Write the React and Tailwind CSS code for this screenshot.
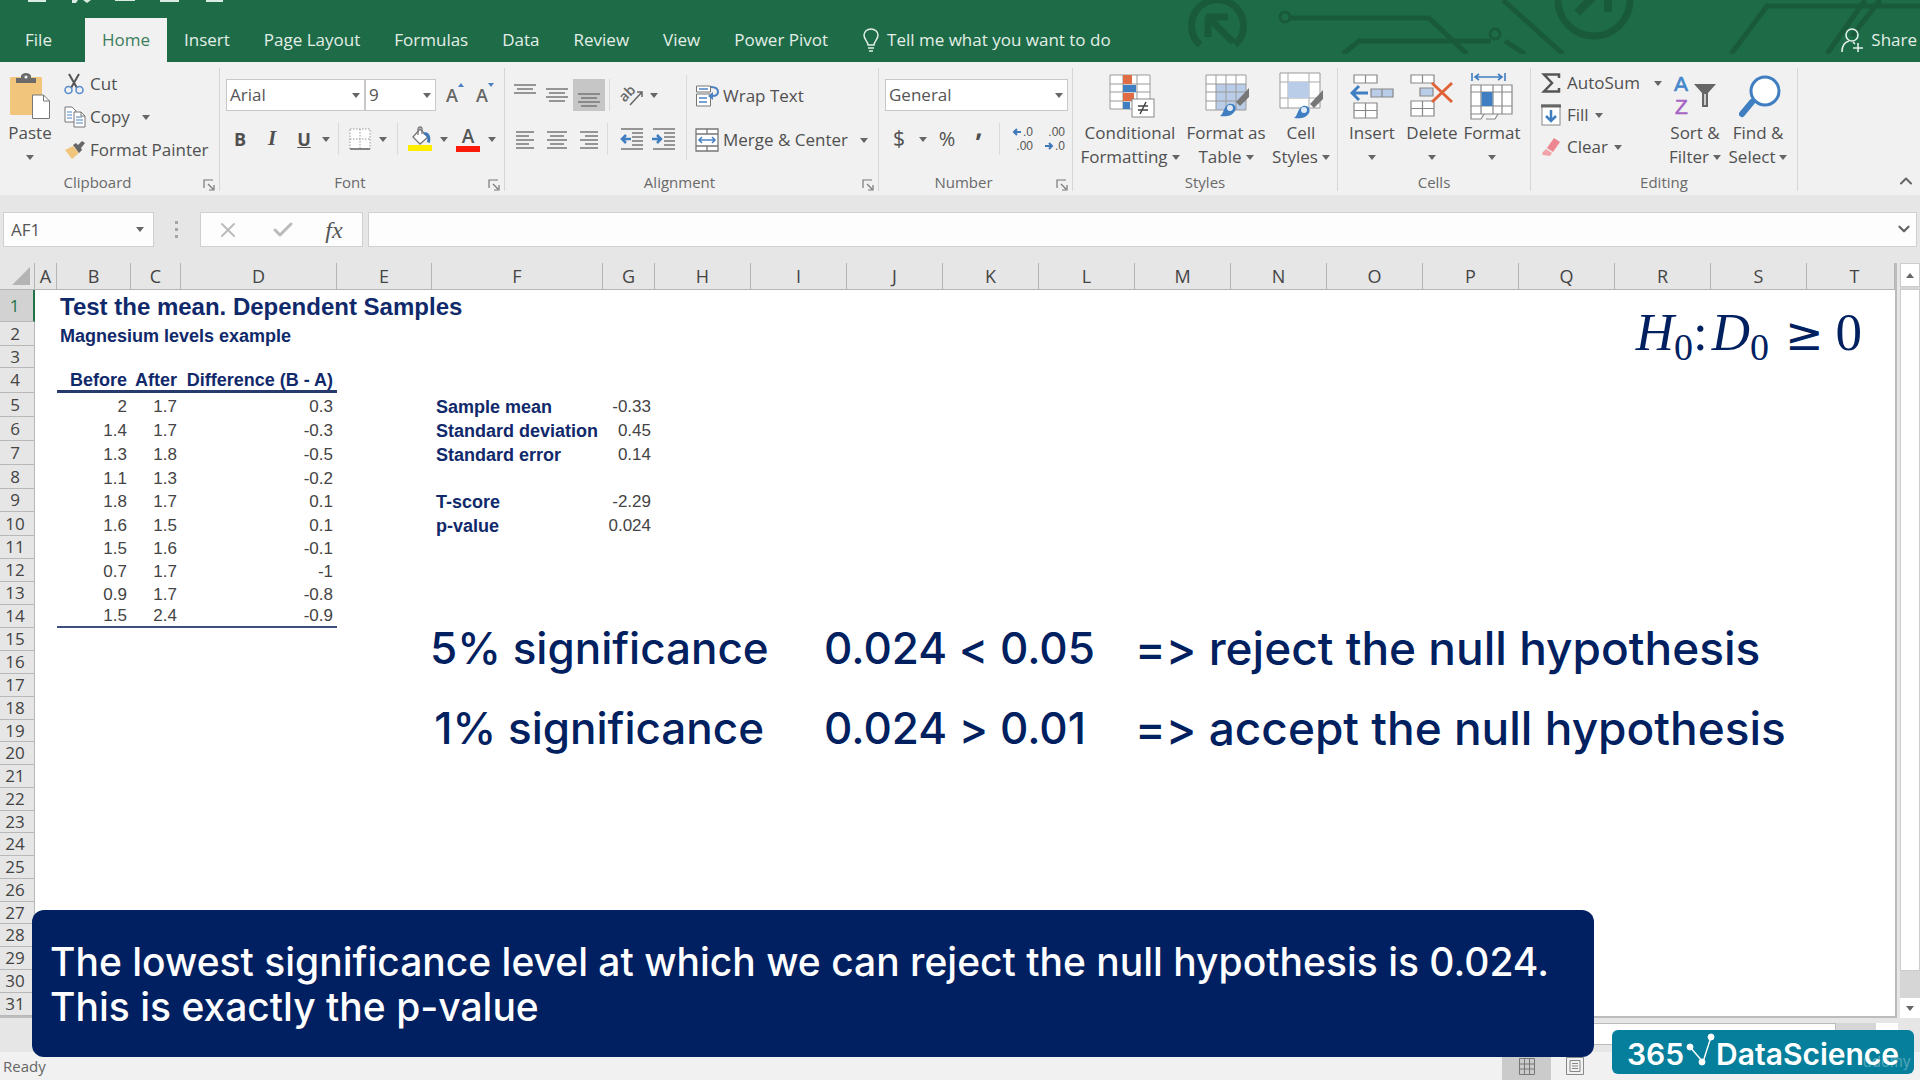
import clsx from 'clsx'
import { Check, ChevronDown, ChevronUp, X } from 'lucide-react'

const TABS = ['File', 'Home', 'Insert', 'Page Layout', 'Formulas', 'Data', 'Review', 'View', 'Power Pivot']

const COLUMNS = [
  { id: 'A', w: 'w-[22px]' },
  { id: 'B', w: 'w-[74px]' },
  { id: 'C', w: 'w-[50px]' },
  { id: 'D', w: 'w-[156px]' },
  { id: 'E', w: 'w-[95px]' },
  { id: 'F', w: 'w-[171px]' },
  { id: 'G', w: 'w-[52px]' },
  ...'HIJKLMNOPQRS'.split('').map(id => ({ id, w: 'w-[96px]' })),
  { id: 'T', w: '' },
]

const HEIGHTS = {
  1: 'h-[32px]', 2: 'h-[24px]', 3: 'h-[22px]', 4: 'h-[25px]', 5: 'h-[24px]', 6: 'h-[24px]',
  7: 'h-[24px]', 8: 'h-[24px]', 9: 'h-[23px]', 10: 'h-[24px]', 19: 'h-[22px]', 23: 'h-[22px]', 27: 'h-[22px]',
}

const SAMPLES = [
  ['2', '1.7', '0.3'],
  ['1.4', '1.7', '-0.3'],
  ['1.3', '1.8', '-0.5'],
  ['1.1', '1.3', '-0.2'],
  ['1.8', '1.7', '0.1'],
  ['1.6', '1.5', '0.1'],
  ['1.5', '1.6', '-0.1'],
  ['0.7', '1.7', '-1'],
  ['0.9', '1.7', '-0.8'],
  ['1.5', '2.4', '-0.9'],
]

const STATS = {
  5: ['Sample mean', '-0.33'],
  6: ['Standard deviation', '0.45'],
  7: ['Standard error', '0.14'],
  9: ['T-score', '-2.29'],
  10: ['p-value', '0.024'],
}

const ROWS = Array.from({ length: 31 }, (_, i) => i + 1)

function cellValue(row, col) {
  if (row === 1 && col === 'B') return 'Test the mean. Dependent Samples'
  if (row === 2 && col === 'B') return 'Magnesium levels example'
  if (row === 4) return { B: 'Before', C: 'After', D: 'Difference (B - A)' }[col]
  if (row >= 5 && row <= 14 && 'BCD'.includes(col)) return SAMPLES[row - 5]['BCD'.indexOf(col)]
  if (STATS[row] && col === 'F') return STATS[row][0]
  if (STATS[row] && col === 'G') return STATS[row][1]
  return null
}

/* ---------- small pieces ---------- */

const Caret = ({ className }) => (
  <svg viewBox="0 0 8 5" className={clsx('h-[5px] w-2 shrink-0', className)} fill="#666"><path d="M0 0h8L4 5z" /></svg>
)

const Divider = ({ className }) => <span className={clsx('w-px shrink-0 bg-[#dadada]', className)} />

function IconButton({ label, className, children }) {
  return (
    <button aria-label={label} className={clsx('flex shrink-0 items-center justify-center', className)}>{children}</button>
  )
}

function Group({ name, launcher, className, children }) {
  return (
    <section aria-label={name} className={clsx('relative flex shrink-0 flex-col border-r border-[#d6d6d6]', className)}>
      <div className="flex h-[106px]">{children}</div>
      <div className={clsx('flex h-[20px] items-end justify-center text-[15px] leading-[18px] text-[#6a6a6a]', launcher && 'pr-6')}>{name}</div>
      {launcher && (
        <button aria-label={`${name} settings`} className="absolute right-1 bottom-0">
          <svg viewBox="0 0 12 12" className="size-3" fill="none" stroke="#777" strokeWidth="1.2">
            <path d="M1 9V1h9M5 5l5 5M11 6v5H6" />
          </svg>
        </button>
      )}
    </section>
  )
}

function BigButton({ icon, lines, className }) {
  const [first, second] = lines
  return (
    <button className={clsx('flex shrink-0 flex-col items-center pt-[3px] whitespace-nowrap', className)}>
      <span className="flex h-[50px] items-center">{icon}</span>
      <span className="h-6 leading-6">{first}</span>
      <span className="flex h-6 items-center gap-1 leading-6">{second}<Caret /></span>
    </button>
  )
}

function Combo({ label, value, className }) {
  return (
    <span className={clsx('relative h-8 shrink-0', className)}>
      <select aria-label={label} defaultValue={value}
              className="h-full w-full appearance-none border border-[#c8c8c8] bg-white px-[3px] text-[17px] text-[#555] outline-none">
        <option>{value}</option>
      </select>
      <Caret className="pointer-events-none absolute top-[14px] right-[5px]" />
    </span>
  )
}

/* ---------- icons ---------- */

const PasteIcon = () => (
  <svg viewBox="0 0 42 46" className="h-[46px] w-[42px]">
    <rect x="1" y="4" width="32" height="38" rx="1" fill="#f2c57c" />
    <path d="M7 10V5h5V3a5 3 0 0 1 10 0v2h5v5z" fill="#6b6b6b" />
    <circle cx="17" cy="4" r="1.6" fill="#f1f1f1" />
    <path d="M23.500 22h11l6 6v17.500h-17z" fill="#fff" stroke="#777" />
    <path d="M34.500 22v6h6" fill="none" stroke="#777" />
  </svg>
)

const CutIcon = () => (
  <svg viewBox="0 0 20 22" className="h-[22px] w-5" fill="none">
    <path d="M5 1l8 14M15 1L7 15" stroke="#555" strokeWidth="2" />
    <circle cx="4.500" cy="17" r="3.500" stroke="#5b8fd0" strokeWidth="1.600" />
    <circle cx="15.500" cy="17" r="3.500" stroke="#5b8fd0" strokeWidth="1.600" />
  </svg>
)

const CopyIcon = () => (
  <svg viewBox="0 0 22 22" className="size-[22px]" fill="#fff" stroke="#777">
    <path d="M1 1h7l4 4v11H1z" />
    <path d="M3 6h5M3 9h5M3 12h5" stroke="#4a82c4" />
    <path d="M10 6h7l4 4v11H10z" />
    <path d="M12 11h6M12 14h7M12 17h7" stroke="#4a82c4" />
    <path d="M17 6v4h4" fill="none" />
  </svg>
)

const BrushIcon = () => (
  <svg viewBox="0 0 22 20" className="h-5 w-[22px]">
    <path d="M1 10l8-4 6 7-7 6z" fill="#f2c57c" />
    <path d="M9 5l3-2 2 2 4-4 3 2-4 5 1 2-3 3z" fill="#666" />
  </svg>
)

// Horizontal text lines, each given as [x1, x2, y]
const Lines = ({ rows, children }) => (
  <svg viewBox="0 0 24 24" className="size-6" fill="none" stroke="#767676" strokeWidth="1.500">
    {rows.map(([a, b, y]) => <path key={y} d={`M${a} ${y}H${b}`} />)}
    {children}
  </svg>
)

const OUTDENT = [[1, 23, 2], [12, 23, 6], [12, 23, 10], [12, 23, 14], [12, 23, 18], [1, 23, 22]]

const FontSizeIcon = ({ up }) => (
  <span className="relative w-full pr-1 text-center text-[18px] leading-6 font-semibold text-[#666]">
    A
    <svg viewBox="0 0 6 4" className="absolute top-0 right-0 h-1 w-1.5" fill="#4a82c4">
      <path d={up ? 'M0 4h6L3 0z' : 'M0 0h6L3 4z'} />
    </svg>
  </span>
)

const BorderIcon = () => (
  <svg viewBox="0 0 22 22" className="size-[22px]" fill="#fff" stroke="#999">
    <path d="M1 1h20v20H1zM11 1v20M1 11h20" strokeDasharray="1.500 1.500" />
    <path d="M1 21h20" stroke="#666" strokeWidth="1.500" />
  </svg>
)

const FillColorIcon = () => (
  <svg viewBox="0 0 24 26" className="h-[26px] w-6">
    <path d="M12 3l8 8-8 7-7-7z" fill="#fff" stroke="#777" strokeWidth="1.300" />
    <path d="M10 9V3a2 2 0 0 1 4 0v5" fill="none" stroke="#777" strokeWidth="1.300" />
    <path d="M17 6c5 1 6 5 5 11l-3-1c1-4 0-6-4-8z" fill="#4078b8" />
    <rect y="19" width="24" height="6" fill="#ffed00" />
  </svg>
)

const FontColorIcon = () => (
  <span className="flex w-6 flex-col items-center text-[19px] leading-5 font-semibold text-[#555]">
    A<span className="h-1.5 w-6 bg-[#fb1a09]" />
  </span>
)

const OrientIcon = () => (
  <svg viewBox="0 0 26 24" className="h-6 w-[26px] overflow-visible" fill="none" stroke="#666" strokeWidth="1.500">
    <text x="0" y="15" transform="rotate(-45 8 12)" fontSize="14" fontWeight="600" fill="#666" stroke="none">ab</text>
    <path d="M10 22L22 9M17 9h5v5" />
  </svg>
)

const WrapIcon = () => (
  <svg viewBox="0 0 24 24" className="size-6" fill="#fff" stroke="#777">
    <path d="M1.500 2h14v6h-14zM1.500 10h14v12h-14z" />
    <path d="M4 5h9M4 14h8M4 18h8" stroke="#4a82c4" strokeWidth="1.400" />
    <path d="M16 3c5 0 7 2 7 5s-2 4-6 4" fill="none" stroke="#4a82c4" strokeWidth="2" />
    <path d="M18 8l-5 4 5 4z" fill="#4a82c4" stroke="none" />
  </svg>
)

const MergeIcon = () => (
  <svg viewBox="0 0 24 24" className="size-6" fill="#fff" stroke="#777" strokeWidth="1.300">
    <path d="M1 1h22v22H1zM1 6h22M1 18h22M12 1v5M12 18v5" />
    <path d="M4 12h16M7 9l-3 3 3 3M17 9l3 3-3 3" fill="none" stroke="#4a82c4" strokeWidth="1.600" />
  </svg>
)

const DecimalIcon = ({ top, bottom, left }) => (
  <svg viewBox="0 0 22 26" className="h-[26px] w-[22px] overflow-visible font-['Liberation_Sans',sans-serif]" fill="#555" fontSize="12">
    <text x="21" y="10" textAnchor="end">{top}</text>
    <text x="21" y="24" textAnchor="end">{bottom}</text>
    <path d={left ? 'M9 6H2M5 3L2 6l3 3' : 'M1 20h7M5 17l3 3-3 3'} fill="none" stroke="#3f77b8" strokeWidth="2" />
  </svg>
)

const Brush = ({ x, y }) => (
  <g transform={`translate(${x} ${y})`}>
    <path d="M29 0v9l-9 9-4-4z" fill="#777" />
    <path d="M0 28c4-2 3-9 9-12 5-1 8 3 6 7-3 5-9 6-15 5z" fill="#3f7ec0" />
    <circle cx="10" cy="20" r="3" fill="#dfeaf6" />
  </g>
)

const ConditionalIcon = () => (
  <svg viewBox="0 0 46 44" className="ml-1 h-11 w-[46px]">
    <path d="M1 1h40v34H1zM1 10h40M1 18h40M1 27h40M14 1v34M28 1v34" fill="#fff" stroke="#999" />
    <path d="M14 1h9v9h-9zM14 19h11v8H14z" fill="#e06c43" />
    <path d="M14 11h13v7H14zM14 28h7v7h-7z" fill="#3f7ec0" />
    <rect x="23" y="25" width="22" height="18" fill="#fff" stroke="#888" />
    <path d="M29 32h10M29 36h10M37 28l-6 12" stroke="#444" strokeWidth="1.500" />
  </svg>
)

const FormatTableIcon = () => (
  <svg viewBox="0 0 46 44" className="ml-1 h-11 w-[46px]">
    <path d="M1 1h40v35H1z" fill="#fff" />
    <path d="M11 10h30v26H11z" fill="#b9cde8" />
    <path d="M1 1h40v35H1zM1 10h40M1 18h40M1 27h40M11 1v35M21 1v35M31 1v35" fill="none" stroke="#999" />
    <Brush x="15" y="14" />
  </svg>
)

const CellStylesIcon = () => (
  <svg viewBox="0 0 48 48" className="ml-1 size-12">
    <path d="M1 1h40v35H1z" fill="#fff" stroke="#999" />
    <path d="M1 10h40M1 26h40M9 1v35M30 1v35" stroke="#aaa" />
    <path d="M9 10h21v16H9z" fill="#b9cde8" />
    <Brush x="15" y="18" />
  </svg>
)

const InsertIcon = () => (
  <svg viewBox="0 0 44 46" className="h-[46px] w-11" fill="#fff" stroke="#888" strokeWidth="1.200">
    <path d="M4 2h23v8H4zM15.500 2v8M4 30h23v15H4zM4 37.500h23M15.500 30v15" />
    <path d="M21 16h22v8H21zM32 16v8" fill="#b9cde8" />
    <path d="M18 20H2M9 13l-7 7 7 7" fill="none" stroke="#3f7ec0" strokeWidth="3" />
  </svg>
)

const DeleteIcon = () => (
  <svg viewBox="0 0 44 46" className="h-[46px] w-11" fill="#fff" stroke="#888" strokeWidth="1.200">
    <path d="M1 2h23v8H1zM12.500 2v8M1 28h23v15H1zM1 35.500h23M12.500 28v15" />
    <path d="M10 15h13v8H10z" fill="#b9cde8" />
    <path d="M22 10l20 19M42 10L22 29" fill="none" stroke="#e06338" strokeWidth="3" />
  </svg>
)

const FormatIcon = () => (
  <svg viewBox="0 0 44 48" className="h-12 w-11" fill="#fff" stroke="#888" strokeWidth="1.200">
    <path d="M1 13h41v29H1zM1 20h41M1 34h41M11 13v29M23 13v29M32 13v29M1 42v5h10l3-5M16 47h9l3-5" />
    <path d="M11.500 20h11v14h-11z" fill="#3f7ec0" stroke="none" />
    <path d="M2 1v8M35 1v8M5 5h27M9 2L5 5l4 3M28 2l4 3-4 3" fill="none" stroke="#3f7ec0" strokeWidth="1.600" />
  </svg>
)

const SumIcon = () => (
  <svg viewBox="0 0 20 22" className="h-[22px] w-5" fill="none" stroke="#555" strokeWidth="2.500">
    <path d="M18 6V2.500H3l8 8.500-8 8.500h15V16" />
  </svg>
)

const FillIcon = () => (
  <svg viewBox="0 0 20 22" className="h-[22px] w-5" fill="none">
    <rect x="1" y="1" width="18" height="20" fill="#fff" stroke="#888" />
    <path d="M0 2h20" stroke="#666" strokeWidth="3" />
    <path d="M10 6v11M5 12l5 5 5-5" stroke="#3f7ec0" strokeWidth="2.500" />
  </svg>
)

const ClearIcon = () => (
  <svg viewBox="0 0 20 20" className="size-5">
    <path d="M13 1l6 4-7 10-6-4z" fill="#ec8790" />
    <path d="M5 12l6 4-2 3-7-1-1-2z" fill="#f2a3a9" />
  </svg>
)

const SortIcon = () => (
  <svg viewBox="0 0 42 48" className="h-12 w-[42px] overflow-visible font-['Liberation_Sans',sans-serif]" fontSize="21">
    <text x="0" y="19" fill="#4386cb" stroke="#4386cb" strokeWidth="0.600">A</text>
    <text x="1" y="42" fill="#a664c4" stroke="#a664c4" strokeWidth="0.600">Z</text>
    <path d="M20 12h22l-8 9v14h-6V21z" fill="#666" />
    <path d="M31 22v11" stroke="#f1f1f1" strokeWidth="1.500" />
  </svg>
)

const FindIcon = () => (
  <svg viewBox="0 0 42 44" className="ml-1 h-11 w-[42px]">
    <path d="M13 28L3 40" stroke="#3f7ec0" strokeWidth="6" strokeLinecap="round" />
    <circle cx="26" cy="17" r="14" fill="#fff" stroke="#3f7ec0" strokeWidth="3" />
  </svg>
)

/* ---------- page parts ---------- */

function TitleBar() {
  return (
    <header className="relative flex h-[62px] items-end overflow-hidden bg-[#1e6b47] text-[17px] text-[#e3efe8]">
      <svg viewBox="0 0 740 54" className="absolute top-0 right-0 h-[54px] w-[740px]" fill="none" stroke="#195a3b" strokeWidth="5">
        <path d="M20 45a26 26 0 1 1 35 0M28 17v20M26 17h22M29 18l24 24" strokeWidth="7" />
        <circle cx="105" cy="17" r="5" strokeWidth="3" />
        <path d="M111 18h138l38 36M163 54l16-13h132M325 41l20 13" />
        <circle cx="315" cy="34" r="5" strokeWidth="3" />
        <path d="M323 0l60 54" />
        <circle cx="414" cy="0" r="36" strokeWidth="7" />
        <path d="M397 13l18-18M428 12V-4" strokeWidth="8" />
        <path d="M551 54l36-48h153M647 54l38-54M672 36l28-36" />
      </svg>
      <svg viewBox="0 0 230 4" className="absolute top-0 left-0 h-1 w-[230px]" fill="#dbeae2">
        <path d="M28 0h18v2H28zM72 0h6l-2 3h-4zM83 0h8l-4 3zM115 0h20v1h-20zM160 0h19v2h-19zM206 0h17v2h-17z" />
      </svg>
      <nav className="relative flex h-[44px]">
        {TABS.map(tab => (
          <button key={tab}
                  className={clsx('h-full whitespace-nowrap',
                    tab === 'Home' ? 'w-[82px] bg-[#f1f1f1] text-[#3c7d5c]' : tab === 'File' ? 'w-[85px] pr-2' : 'px-[17px]')}>
            {tab}
          </button>
        ))}
      </nav>
      <button className="relative flex h-[44px] items-center gap-2 pl-[18px]">
        <svg viewBox="0 0 16 24" className="h-6 w-4" fill="none" stroke="#e3efe8" strokeWidth="1.500">
          <path d="M5 17c0-4-4-5-4-10a7 6 0 0 1 14 0c0 5-4 6-4 10zM5 20h6M6 23h4" />
        </svg>
        Tell me what you want to do
      </button>
      <button className="relative ml-auto flex h-[44px] items-center gap-2 pr-[3px]">
        <svg viewBox="0 0 22 26" className="h-[26px] w-[22px]" fill="none" stroke="#e3efe8" strokeWidth="1.600">
          <circle cx="11" cy="8" r="6" />
          <path d="M1 25c0-7 3-10 7-11M12 15l2 2M17 16v9M12 21h10" />
        </svg>
        Share
      </button>
    </header>
  )
}

function Ribbon() {
  return (
    <div className="relative flex h-[133px] bg-[#f1f1f1] pt-[6px] pb-1 text-[17px] text-[#505050]">
      <Group name="Clipboard" launcher className="w-[220px]">
        <BigButton icon={<PasteIcon />} lines={['Paste']} className="w-[60px]" />
        <div className="flex flex-col gap-[9px] pt-1 pl-1">
          <button className="flex h-6 items-center gap-[6px]"><CutIcon />Cut</button>
          <button className="flex h-6 items-center gap-1"><CopyIcon />Copy<Caret className="ml-2" /></button>
          <button className="flex h-6 items-center gap-1 whitespace-nowrap"><BrushIcon />Format Painter</button>
        </div>
      </Group>

      <Group name="Font" launcher className="w-[285px]">
        <div className="flex flex-col gap-[14px] pt-[11px] pl-[6px]">
          <div className="flex items-center">
            <Combo label="Font family" value="Arial" className="w-[139px]" />
            <Combo label="Font size" value="9" className="w-[71px]" />
            <IconButton label="Increase font size" className="ml-2 w-5"><FontSizeIcon up /></IconButton>
            <IconButton label="Decrease font size" className="ml-[10px] w-5"><FontSizeIcon /></IconButton>
          </div>
          <div className="flex h-7 items-center">
            <IconButton label="Bold" className="w-7 text-[18px] font-bold">B</IconButton>
            <IconButton label="Italic" className="ml-1 w-7 font-['Liberation_Serif',serif] text-[21px] font-bold italic">I</IconButton>
            <IconButton label="Underline" className="ml-1 w-7 text-[18px] font-bold underline">U</IconButton>
            <Caret className="ml-1" />
            <Divider className="ml-2 h-8" />
            <IconButton label="Borders" className="ml-[10px] w-[22px]"><BorderIcon /></IconButton>
            <Caret className="ml-2" />
            <Divider className="ml-[10px] h-8" />
            <IconButton label="Fill colour" className="ml-[10px] w-6"><FillColorIcon /></IconButton>
            <Caret className="ml-2" />
            <IconButton label="Font colour" className="ml-2 w-6"><FontColorIcon /></IconButton>
            <Caret className="ml-2" />
          </div>
        </div>
      </Group>

      <Group name="Alignment" launcher className="w-[374px]">
        <div className="flex flex-col gap-[14px] pt-[11px] pl-[6px]">
          <div className="flex h-8 items-center">
            <IconButton label="Top align" className="w-7"><Lines rows={[[1, 23, 2], [4, 20, 6], [1, 23, 10]]} /></IconButton>
            <IconButton label="Middle align" className="ml-1 w-7"><Lines rows={[[1, 23, 6], [4, 20, 10], [1, 23, 14], [4, 20, 18]]} /></IconButton>
            <IconButton label="Bottom align" className="ml-[2px] h-8 w-8 bg-[#c6c6c6]"><Lines rows={[[1, 23, 11], [4, 20, 15], [1, 23, 19], [4, 20, 23]]} /></IconButton>
            <Divider className="ml-1 h-8" />
            <IconButton label="Orientation" className="ml-[10px] w-[26px]"><OrientIcon /></IconButton>
            <Caret className="ml-1" />
          </div>
          <div className="flex h-7 items-center">
            <IconButton label="Align left" className="w-7"><Lines rows={[[3, 21, 5], [3, 16, 9], [3, 21, 13], [3, 16, 17], [3, 21, 21]]} /></IconButton>
            <IconButton label="Center" className="ml-1 w-7"><Lines rows={[[2, 22, 5], [5, 19, 9], [2, 22, 13], [5, 19, 17], [2, 22, 21]]} /></IconButton>
            <IconButton label="Align right" className="ml-1 w-7"><Lines rows={[[3, 21, 5], [8, 21, 9], [3, 21, 13], [8, 21, 17], [3, 21, 21]]} /></IconButton>
            <Divider className="ml-1 h-8" />
            <IconButton label="Decrease indent" className="ml-[10px] w-7">
              <Lines rows={OUTDENT}><path d="M11 12H2M6 8l-4 4 4 4" stroke="#3f7ec0" strokeWidth="2.500" /></Lines>
            </IconButton>
            <IconButton label="Increase indent" className="ml-1 w-7">
              <Lines rows={OUTDENT}><path d="M0 12h9M5 8l4 4-4 4" stroke="#3f7ec0" strokeWidth="2.500" /></Lines>
            </IconButton>
          </div>
        </div>
        <Divider className="mt-[7px] ml-2 h-[85px]" />
        <div className="flex flex-col gap-[18px] pt-4 pl-2">
          <button className="flex h-6 items-center gap-1 whitespace-nowrap"><WrapIcon />Wrap Text</button>
          <button className="flex h-7 items-center gap-1 whitespace-nowrap"><MergeIcon />Merge &amp; Center<Caret className="ml-2" /></button>
        </div>
      </Group>

      <Group name="Number" launcher className="w-[194px]">
        <div className="flex flex-col gap-[14px] pt-[11px] pl-[6px]">
          <Combo label="Number format" value="General" className="w-[183px]" />
          <div className="flex h-7 items-center">
            <IconButton label="Currency" className="w-7 text-[21px]">$</IconButton>
            <Caret className="ml-[6px]" />
            <IconButton label="Percent" className="ml-2 w-6 text-[20px]">%</IconButton>
            <IconButton label="Comma" className="ml-2 h-9 w-6 items-start text-[26px] leading-3 font-bold">,</IconButton>
            <Divider className="ml-2 h-8" />
            <IconButton label="Increase decimal" className="ml-3 w-[22px]"><DecimalIcon left top=".0" bottom=".00" /></IconButton>
            <IconButton label="Decrease decimal" className="ml-[10px] w-[22px]"><DecimalIcon top=".00" bottom=".0" /></IconButton>
          </div>
        </div>
      </Group>

      <Group name="Styles" className="w-[265px]">
        <BigButton icon={<ConditionalIcon />} lines={['Conditional', 'Formatting']} className="w-[114px]" />
        <BigButton icon={<FormatTableIcon />} lines={['Format as', 'Table']} className="w-[78px]" />
        <BigButton icon={<CellStylesIcon />} lines={['Cell', 'Styles']} className="w-[72px]" />
      </Group>

      <Group name="Cells" className="w-[193px]">
        <BigButton icon={<InsertIcon />} lines={['Insert']} className="ml-1 w-[60px]" />
        <BigButton icon={<DeleteIcon />} lines={['Delete']} className="w-[60px]" />
        <BigButton icon={<FormatIcon />} lines={['Format']} className="w-[60px]" />
      </Group>

      <Group name="Editing" className="w-[267px]">
        <div className="flex w-[132px] flex-col gap-2 pt-[3px] pl-[10px]">
          <button className="flex h-6 items-center gap-[6px]"><SumIcon />AutoSum<Caret className="ml-2" /></button>
          <button className="flex h-6 items-center gap-[6px]"><FillIcon />Fill<Caret /></button>
          <button className="flex h-6 items-center gap-[6px]"><ClearIcon />Clear<Caret /></button>
        </div>
        <BigButton icon={<SortIcon />} lines={['Sort &', 'Filter']} className="w-[64px]" />
        <BigButton icon={<FindIcon />} lines={['Find &', 'Select']} className="w-[62px]" />
      </Group>

      <button aria-label="Collapse ribbon" className="mt-auto mr-1 ml-auto"><ChevronUp size={20} color="#666" strokeWidth={2.500} /></button>
    </div>
  )
}

function FormulaBar() {
  return (
    <div className="flex h-[68px] items-start bg-[#e6e6e6] px-[3px] pt-[17px]">
      <span className="relative h-[35px] w-[151px] shrink-0">
        <input aria-label="Name box" defaultValue="AF1"
               className="h-full w-full border border-[#d0d0d0] bg-[#fdfdfd] px-[7px] text-[17px] text-[#555] outline-none" />
        <Caret className="pointer-events-none absolute top-[15px] right-[10px]" />
      </span>
      <svg viewBox="0 0 4 18" className="mx-[21px] mt-[9px] h-[18px] w-1 shrink-0" fill="#a5a5a5">
        <path d="M0 0h3v3H0zM0 7h3v3H0zM0 14h3v3H0z" />
      </svg>
      <div className="flex h-[35px] w-[163px] shrink-0 items-center justify-around border border-[#d0d0d0] bg-[#fdfdfd] pr-1">
        <button aria-label="Cancel"><X size={24} color="#bbb" /></button>
        <button aria-label="Enter"><Check size={24} color="#bbb" strokeWidth={3} /></button>
        <button aria-label="Insert function" className="font-['Liberation_Serif',serif] text-[24px] leading-6 text-[#555] italic">fx</button>
      </div>
      <span className="relative ml-[5px] h-[35px] grow">
        <input aria-label="Formula" className="h-full w-full border border-[#d0d0d0] bg-[#fdfdfd] px-2 outline-none" />
        <ChevronDown size={18} color="#666" strokeWidth={3} className="pointer-events-none absolute top-2 right-1" />
      </span>
    </div>
  )
}

function Cell({ row, col }) {
  const inTable = 'BCD'.includes(col)
  const value = cellValue(row, col)
  const bold = row <= 4 || col === 'F'
  return (
    <td className={clsx('p-0 align-bottom whitespace-nowrap',
      row === 1 ? 'text-[24px] leading-[30px]' : bold ? 'text-[18px] leading-5' : 'text-[17px] leading-5',
      bold ? 'font-bold text-[#10296b]' : 'text-[#444]',
      row <= 2 ? 'pl-[3px] text-left' : col === 'F' ? 'pl-1 text-left' : 'pr-[4px] text-right',
      row === 4 && inTable && 'border-b-[3px] border-[#263a6e]',
      row === 14 && inTable && 'border-b-2 border-[#3c4f7d]')}>
      {value}
    </td>
  )
}

function Sheet() {
  return (
    <table className="w-full table-fixed border-separate border-spacing-0 bg-white font-['Liberation_Sans',Arial,sans-serif]">
      <colgroup>
        <col className="w-[35px]" />
        {COLUMNS.map(c => <col key={c.id} className={c.w} />)}
      </colgroup>
      <thead className="bg-[#e6e6e6] font-['Open_Sans',sans-serif]">
        <tr className="h-[27px]">
          <th aria-label="Select all" className="border-r border-b border-[#b5b5b5] p-0">
            <svg viewBox="0 0 18 18" className="ml-3 size-[18px]" fill="#b4b4b4"><path d="M18 0v18H0z" /></svg>
          </th>
          {COLUMNS.map(c => (
            <th key={c.id} scope="col"
                className={clsx('border-r border-b border-[#b5b5b5] p-0 text-[18px] leading-6 font-normal text-[#444]', c.id === 'T' && 'pl-2')}>
              {c.id}
            </th>
          ))}
        </tr>
      </thead>
      <tbody>
        {ROWS.map(row => (
          <tr key={row} className={HEIGHTS[row] ?? 'h-[23px]'}>
            <th scope="row"
                className={clsx("border-b border-[#b8b8b8] p-0 pr-1 text-center font-['Open_Sans',sans-serif] text-[17px] leading-5 font-normal",
                  row === 1 ? 'border-r-2 border-r-[#217346] bg-[#d2d2d2] text-[#217346]' : 'border-r bg-[#e6e6e6] text-[#444]')}>
              {row}
            </th>
            {COLUMNS.map(c => <Cell key={c.id} row={row} col={c.id} />)}
          </tr>
        ))}
      </tbody>
    </table>
  )
}

function Verdicts() {
  return (
    <div className="absolute top-[620px] left-[430px] grid grid-cols-[334px_311px_auto] gap-y-6 text-[44px] leading-[56px] font-medium whitespace-nowrap text-[#00205f] [font-variant-ligatures:none]">
      <p className="text-right">5% significance</p>
      <p className="pl-[60px]">0.024 &lt; 0.05</p>
      <p className="pl-[60px] text-[46px]">=&gt; reject the null hypothesis</p>
      <p className="text-right">1% significance</p>
      <p className="pl-[60px]">0.024 &gt; 0.01</p>
      <p className="pl-[60px] text-[46px]">=&gt; accept the null hypothesis</p>
    </div>
  )
}

function Logo() {
  return (
    <div className="absolute right-[6px] bottom-[6px] flex h-11 w-[302px] items-center justify-center rounded-md bg-[#057f9b] text-[30px] leading-8 font-semibold text-white">
      <span className="pt-1">365</span>
      <svg viewBox="0 0 32 34" className="-mt-1 h-[34px] w-8" fill="#fff" stroke="#fff">
        <path d="M6 14l13 15L27 4" fill="none" strokeWidth="1.400" />
        <circle cx="6" cy="14" r="3" /><circle cx="18" cy="29" r="3" /><circle cx="27" cy="4" r="3" />
      </svg>
      <span className="pt-1">DataScience</span>
      <span className="absolute right-[3px] bottom-0 text-[15px] leading-6 font-normal text-white/30">ûdemy</span>
    </div>
  )
}

export default function App() {
  return (
    <div className="relative flex min-h-screen flex-col overflow-hidden bg-[#e6e6e6] font-['Open_Sans',sans-serif]">
      <TitleBar />
      <Ribbon />
      <FormulaBar />

      <div className="flex">
        <div className="min-w-0 grow overflow-hidden border-r-2 border-b-2 border-[#bcbcbc]"><Sheet /></div>
        <div className="ml-[3px] flex w-5 shrink-0 flex-col bg-[#d6d6d6]">
          <button aria-label="Scroll up" className="flex h-6 items-center justify-center border border-[#ccc] bg-white"><Caret className="rotate-180" /></button>
          <div className="mt-[2px] grow border border-[#ccc] bg-white" />
          <button aria-label="Scroll down" className="mt-[27px] flex h-5 items-center justify-center bg-white"><Caret /></button>
        </div>
      </div>

      <div className="flex h-[28px] items-start justify-end pt-[5px] pr-[22px]">
        <div className="h-[22px] w-[1000px] border border-[#bbb] bg-white" />
        <div className="h-[22px] w-10 bg-[#d6d6d6]" />
        <button aria-label="Scroll right" className="flex size-[22px] items-center justify-center bg-white"><Caret className="-rotate-90" /></button>
      </div>

      <footer className="mt-auto flex h-[28px] items-center bg-[#f1f1f1] pl-[3px] text-[15px] text-[#666]">
        Ready
        <div className="mr-[335px] ml-auto flex h-full items-center">
          <IconButton label="Normal view" className="h-full w-[49px] bg-[#cbcbcb]">
            <svg viewBox="0 0 16 17" className="h-[17px] w-4" fill="none" stroke="#777"><path d="M.5.5h15v16H.5zM5.500 0v17M10.500 0v17M0 6h16M0 11h16" /></svg>
          </IconButton>
          <IconButton label="Page layout view" className="ml-[14px] w-5">
            <svg viewBox="0 0 18 18" className="size-[18px]" fill="none" stroke="#888"><path d="M.5.5h17v17H.5zM4 3.500h10v11H4zM6 6.500h6M6 9h6M6 11.500h6" /></svg>
          </IconButton>
        </div>
      </footer>

      {/* slide overlays */}
      <p className="absolute top-[302px] right-[58px] flex items-baseline font-['Liberation_Serif',serif] text-[53px] leading-[60px] whitespace-nowrap text-[#00205f]">
        <i>H</i><sub className="text-[38px]">0</sub>
        <span className="mr-1">:</span>
        <i>D</i><sub className="text-[38px]">0</sub>
        <span className="mr-3 ml-4 font-['DejaVu_Sans',sans-serif] text-[46px]">≥</span>
        <span>0</span>
      </p>
      <div className="font-['Inter',sans-serif]">
        <Verdicts />
        <div className="absolute top-[910px] left-8 h-[147px] w-[1562px] rounded-xl bg-[#002062] px-[18px] pt-[29px] text-[39px] leading-[45px] font-medium whitespace-nowrap text-white">
          <p>The lowest significance level at which we can reject the null hypothesis is 0.024.</p>
          <p>This is exactly the p-value</p>
        </div>
        <Logo />
      </div>
    </div>
  )
}
